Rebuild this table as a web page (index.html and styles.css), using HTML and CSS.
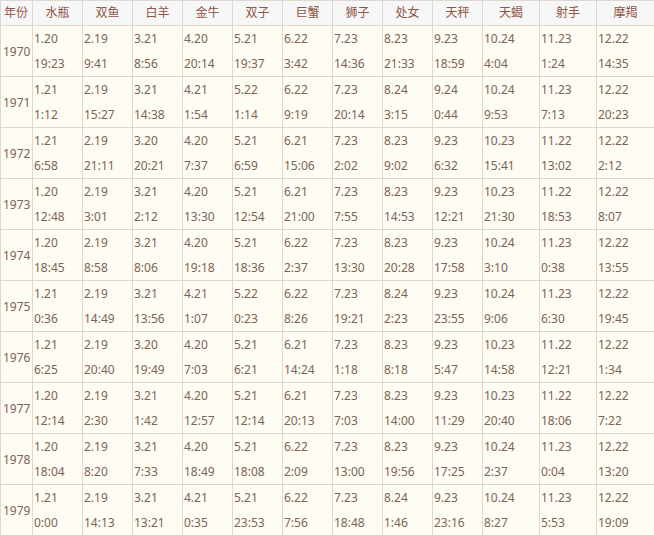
FILE: index.html
```html
<!DOCTYPE html>
<html lang="zh">
<head>
<meta charset="utf-8">
<link rel="stylesheet" href="styles.css">
</head>
<body>
<table class="zodiac">
<colgroup>
<col class="c-year"><col class="c-n"><col class="c-n"><col class="c-n"><col class="c-n"><col class="c-n"><col class="c-n"><col class="c-n"><col class="c-n"><col class="c-n"><col class="c-w"><col class="c-w"><col class="c-w2">
</colgroup>
<thead>
<tr><th class="h-year">年份</th><th>水瓶</th><th>双鱼</th><th>白羊</th><th>金牛</th><th>双子</th><th>巨蟹</th><th>狮子</th><th>处女</th><th>天秤</th><th>天蝎</th><th>射手</th><th>摩羯</th></tr>
</thead>
<tbody>
<tr><td class="year">1970</td><td>1.20<br>19:23</td><td>2.19<br>9:41</td><td>3.21<br>8:56</td><td>4.20<br>20:14</td><td>5.21<br>19:37</td><td>6.22<br>3:42</td><td>7.23<br>14:36</td><td>8.23<br>21:33</td><td>9.23<br>18:59</td><td>10.24<br>4:04</td><td>11.23<br>1:24</td><td>12.22<br>14:35</td></tr>
<tr><td class="year">1971</td><td>1.21<br>1:12</td><td>2.19<br>15:27</td><td>3.21<br>14:38</td><td>4.21<br>1:54</td><td>5.22<br>1:14</td><td>6.22<br>9:19</td><td>7.23<br>20:14</td><td>8.24<br>3:15</td><td>9.24<br>0:44</td><td>10.24<br>9:53</td><td>11.23<br>7:13</td><td>12.22<br>20:23</td></tr>
<tr><td class="year">1972</td><td>1.21<br>6:58</td><td>2.19<br>21:11</td><td>3.20<br>20:21</td><td>4.20<br>7:37</td><td>5.21<br>6:59</td><td>6.21<br>15:06</td><td>7.23<br>2:02</td><td>8.23<br>9:02</td><td>9.23<br>6:32</td><td>10.23<br>15:41</td><td>11.22<br>13:02</td><td>12.22<br>2:12</td></tr>
<tr><td class="year">1973</td><td>1.20<br>12:48</td><td>2.19<br>3:01</td><td>3.21<br>2:12</td><td>4.20<br>13:30</td><td>5.21<br>12:54</td><td>6.21<br>21:00</td><td>7.23<br>7:55</td><td>8.23<br>14:53</td><td>9.23<br>12:21</td><td>10.23<br>21:30</td><td>11.22<br>18:53</td><td>12.22<br>8:07</td></tr>
<tr><td class="year">1974</td><td>1.20<br>18:45</td><td>2.19<br>8:58</td><td>3.21<br>8:06</td><td>4.20<br>19:18</td><td>5.21<br>18:36</td><td>6.22<br>2:37</td><td>7.23<br>13:30</td><td>8.23<br>20:28</td><td>9.23<br>17:58</td><td>10.24<br>3:10</td><td>11.23<br>0:38</td><td>12.22<br>13:55</td></tr>
<tr><td class="year">1975</td><td>1.21<br>0:36</td><td>2.19<br>14:49</td><td>3.21<br>13:56</td><td>4.21<br>1:07</td><td>5.22<br>0:23</td><td>6.22<br>8:26</td><td>7.23<br>19:21</td><td>8.24<br>2:23</td><td>9.23<br>23:55</td><td>10.24<br>9:06</td><td>11.23<br>6:30</td><td>12.22<br>19:45</td></tr>
<tr><td class="year">1976</td><td>1.21<br>6:25</td><td>2.19<br>20:40</td><td>3.20<br>19:49</td><td>4.20<br>7:03</td><td>5.21<br>6:21</td><td>6.21<br>14:24</td><td>7.23<br>1:18</td><td>8.23<br>8:18</td><td>9.23<br>5:47</td><td>10.23<br>14:58</td><td>11.22<br>12:21</td><td>12.22<br>1:34</td></tr>
<tr><td class="year">1977</td><td>1.20<br>12:14</td><td>2.19<br>2:30</td><td>3.21<br>1:42</td><td>4.20<br>12:57</td><td>5.21<br>12:14</td><td>6.21<br>20:13</td><td>7.23<br>7:03</td><td>8.23<br>14:00</td><td>9.23<br>11:29</td><td>10.23<br>20:40</td><td>11.22<br>18:06</td><td>12.22<br>7:22</td></tr>
<tr><td class="year">1978</td><td>1.20<br>18:04</td><td>2.19<br>8:20</td><td>3.21<br>7:33</td><td>4.20<br>18:49</td><td>5.21<br>18:08</td><td>6.22<br>2:09</td><td>7.23<br>13:00</td><td>8.23<br>19:56</td><td>9.23<br>17:25</td><td>10.24<br>2:37</td><td>11.23<br>0:04</td><td>12.22<br>13:20</td></tr>
<tr><td class="year">1979</td><td>1.21<br>0:00</td><td>2.19<br>14:13</td><td>3.21<br>13:21</td><td>4.21<br>0:35</td><td>5.21<br>23:53</td><td>6.22<br>7:56</td><td>7.23<br>18:48</td><td>8.24<br>1:46</td><td>9.23<br>23:16</td><td>10.24<br>8:27</td><td>11.23<br>5:53</td><td>12.22<br>19:09</td></tr>
</tbody>
</table>
</body>
</html>
```
FILE: styles.css
```css
html, body {
  margin: 0;
  padding: 0;
  background: #fffdf7;
}
.zodiac {
  border-collapse: collapse;
  table-layout: fixed;
  width: 654px;
  font-family: "Noto Sans", "Noto Sans CJK SC", sans-serif;
  font-size: 12px;
}
.c-year { width: 32px; }
.c-n { width: 50px; }
.c-w { width: 57px; }
.c-w2 { width: 58px; }
.zodiac th,
.zodiac td {
  border: 1px solid #ddd9d2;
  padding: 0;
  overflow: hidden;
  white-space: nowrap;
}
.zodiac th {
  height: 24px;
  line-height: 24px;
  background: #f7f7f7;
  color: #8f5443;
  font-weight: normal;
  text-align: center;
}
.zodiac th.h-year {
  text-align: left;
  padding-left: 3px;
}
.zodiac td {
  background: #fffcf4;
  color: #7b6455;
  line-height: 25px;
  text-align: left;
  vertical-align: middle;
  padding-left: 1px;
}
.zodiac td.year {
  padding-left: 2px;
}
```
